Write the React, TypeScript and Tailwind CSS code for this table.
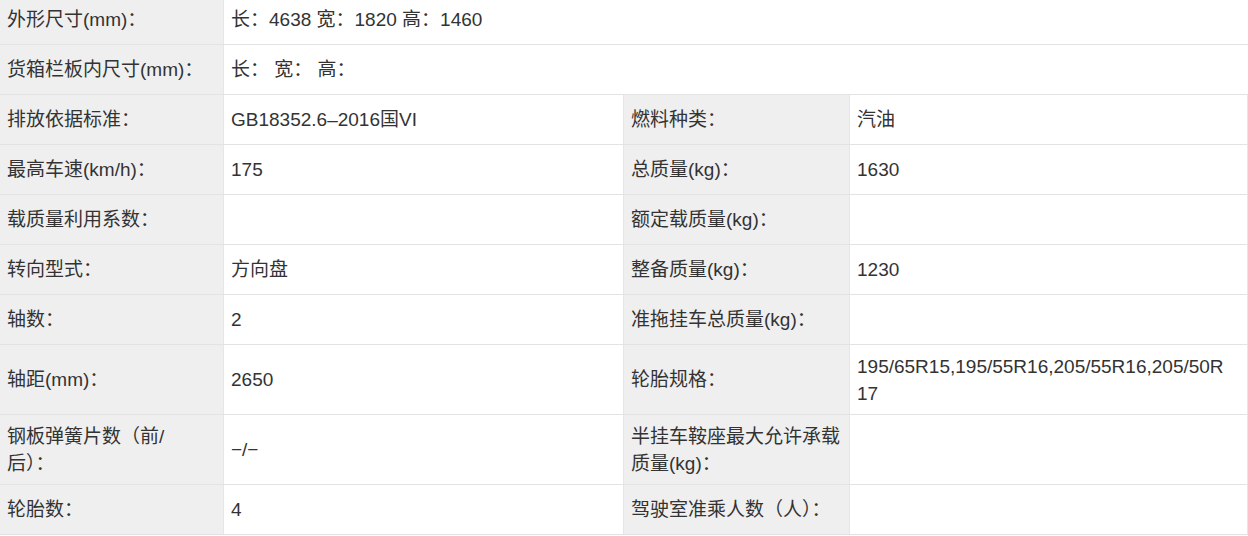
import React from 'react';

type Row = {
  label: string;
  value: string;
  label2?: string;
  value2?: string;
  tall?: boolean;
};

const rows: Row[] = [
  { label: '外形尺寸(mm)：', value: '长：4638 宽：1820 高：1460' },
  { label: '货箱栏板内尺寸(mm)：', value: '长： 宽： 高：' },
  { label: '排放依据标准：', value: 'GB18352.6–2016国VI', label2: '燃料种类：', value2: '汽油' },
  { label: '最高车速(km/h)：', value: '175', label2: '总质量(kg)：', value2: '1630' },
  { label: '载质量利用系数：', value: '', label2: '额定载质量(kg)：', value2: '' },
  { label: '转向型式：', value: '方向盘', label2: '整备质量(kg)：', value2: '1230' },
  { label: '轴数：', value: '2', label2: '准拖挂车总质量(kg)：', value2: '' },
  { label: '轴距(mm)：', value: '2650', label2: '轮胎规格：', value2: '195/65R15,195/55R16,205/55R16,205/50R\n17', tall: true },
  { label: '钢板弹簧片数（前/\n后）：', value: '−/−', label2: '半挂车鞍座最大允许承载质量(kg)：', value2: '', tall: true },
  { label: '轮胎数：', value: '4', label2: '驾驶室准乘人数（人）：', value2: '' },
];

const Cell: React.FC<{ text: string; head?: boolean; span?: boolean }> = ({ text, head, span }) => (
  <div
    className={
      'flex items-center px-[7px] border-r border-[#e6e6e6] break-all whitespace-pre-line leading-[27px] ' +
      (head ? 'bg-[#efefef] ' : 'bg-white ') +
      (span ? 'col-span-3 border-r-0' : '')
    }
  >
    <span>{text}</span>
  </div>
);

const App: React.FC = () => {
  return (
    <div
      className="w-[1248px] h-[536px] overflow-hidden bg-white text-[#333] text-[19px]"
      style={{ fontFamily: '"Liberation Sans", "Noto Sans CJK SC", sans-serif' }}
    >
      <div className="-mt-[5px]">
        {rows.map((r, i) => (
          <div
            key={i}
            className={
              'grid grid-cols-[224px_400px_226px_1fr] border-b border-[#e3e3e3] ' +
              (r.tall ? 'h-[70px]' : 'h-[50px]')
            }
          >
            <Cell text={r.label} head />
            {r.label2 === undefined ? (
              <Cell text={r.value} span />
            ) : (
              <>
                <Cell text={r.value} />
                <Cell text={r.label2} head />
                <Cell text={r.value2 ?? ''} />
              </>
            )}
          </div>
        ))}
      </div>
    </div>
  );
};

export default App;
